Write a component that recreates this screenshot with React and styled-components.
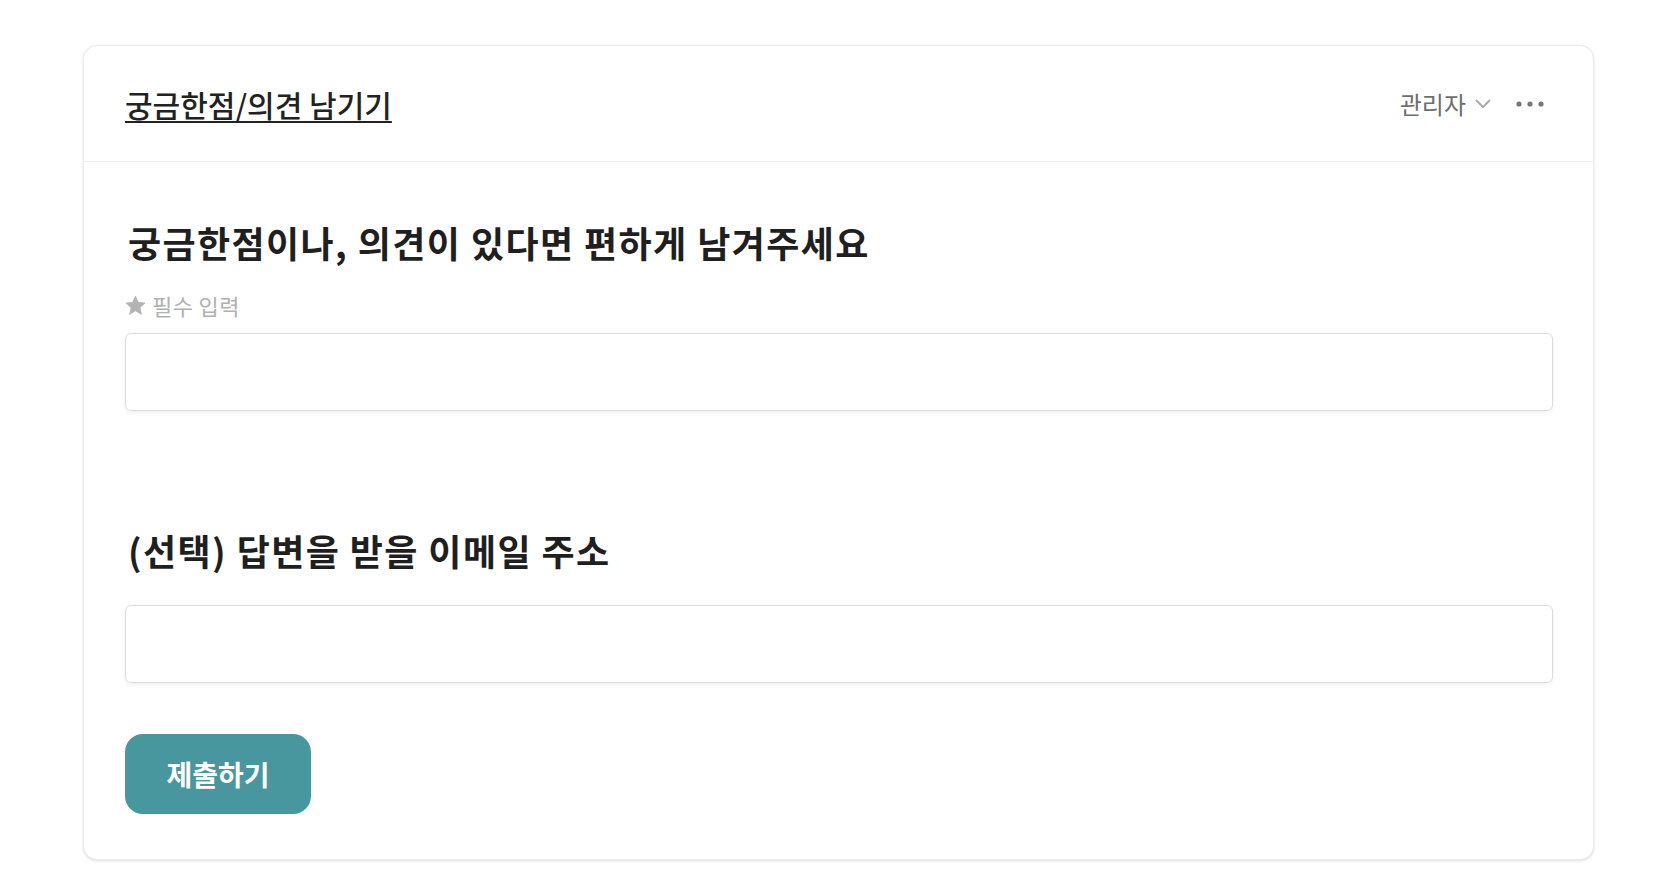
import React from "react";
import styled, { createGlobalStyle } from "styled-components";

const GlobalStyle = createGlobalStyle`
  html, body {
    margin: 0;
    padding: 0;
    background: #ffffff;
  }
  body {
    font-family: "Noto Sans CJK KR", "Noto Sans", sans-serif;
    color: #1f1f1f;
  }
`;

const Page = styled.div`
  padding: 45px 78px 27px 83px;
`;

const Card = styled.section`
  border: 1px solid #ebebeb;
  border-radius: 14px;
  background: #fff;
  box-shadow: 0 1px 3px rgba(0, 0, 0, 0.13);
`;

const Header = styled.header`
  display: flex;
  align-items: center;
  justify-content: space-between;
  height: 115px;
  padding: 0 45px 0 41px;
  border-bottom: 1px solid #f0f0f0;
`;

const Title = styled.a`
  font-size: 30px;
  font-weight: 500;
  color: #222;
  text-decoration: underline;
  text-decoration-thickness: 2px;
  text-underline-offset: 4px;
`;

const Actions = styled.div`
  display: flex;
  align-items: center;
  gap: 20px;
`;

const RoleButton = styled.button`
  display: flex;
  align-items: center;
  gap: 9px;
  border: 0;
  background: none;
  padding: 0;
  font-family: inherit;
  font-size: 24px;
  color: #6e6e6e;
  cursor: pointer;
`;

const MoreButton = styled.button`
  display: flex;
  align-items: center;
  justify-content: center;
  width: 37px;
  height: 30px;
  border: 0;
  background: none;
  padding: 0;
  cursor: pointer;
`;

const Body = styled.div`
  padding: 56px 40px 45px 41px;
`;

const Question = styled.h2`
  margin: 0 0 0 3px;
  font-size: 36px;
  line-height: 48px;
  font-weight: 700;
  color: #1f1f1f;
  letter-spacing: 1.4px;
`;

const Required = styled.div`
  display: flex;
  align-items: center;
  gap: 6px;
  margin-top: 25px;
  font-size: 22px;
  line-height: 28px;
  color: #b0b0b0;
  letter-spacing: 0.4px;
`;

const Field = styled.input`
  display: block;
  box-sizing: border-box;
  width: 100%;
  height: 78px;
  margin-top: ${props => props.gap}px;
  border: 1px solid #dcdcdc;
  border-radius: 6px;
  background: #fff;
  box-shadow: 0 2px 5px rgba(0, 0, 0, 0.06);
  padding: 0 18px;
  font-family: inherit;
  font-size: 22px;
  outline: none;
`;

const Block = styled.div`
  margin-top: ${props => props.gap || 0}px;
`;

const Submit = styled.button`
  display: block;
  width: 186px;
  height: 80px;
  margin-top: 51px;
  border: 0;
  border-radius: 18px;
  background: #48979f;
  color: #fff;
  font-family: inherit;
  font-size: 28px;
  font-weight: 700;
  cursor: pointer;
`;

const Chevron = () => (
  <svg width="16" height="10" viewBox="0 0 16 10" fill="none">
    <path d="M1.5 1.5 L8 8 L14.5 1.5" stroke="#a8a8a8" strokeWidth="1.8" strokeLinecap="round" strokeLinejoin="round" />
  </svg>
);

const Dots = () => (
  <svg width="28" height="6" viewBox="0 0 28 6">
    <circle cx="3" cy="3" r="2.6" fill="#777" />
    <circle cx="14" cy="3" r="2.6" fill="#777" />
    <circle cx="25" cy="3" r="2.6" fill="#777" />
  </svg>
);

const Star = () => (
  <svg width="21" height="21" viewBox="0 0 24 24">
    <path
      d="M12 1.2 L15.2 8.4 L23 9.1 L17.1 14.3 L18.9 22.2 L12 18.1 L5.1 22.2 L6.9 14.3 L1 9.1 L8.8 8.4 Z"
      fill="#b3b3b3"
      stroke="#b3b3b3"
      strokeWidth="0.8"
      strokeLinejoin="round"
    />
  </svg>
);

export default function App() {
  return (
    <>
      <GlobalStyle />
      <Page>
        <Card>
          <Header>
            <Title>궁금한점/의견 남기기</Title>
            <Actions>
              <RoleButton>
                관리자
                <Chevron />
              </RoleButton>
              <MoreButton aria-label="더보기">
                <Dots />
              </MoreButton>
            </Actions>
          </Header>
          <Body>
            <Block>
              <Question>궁금한점이나, 의견이 있다면 편하게 남겨주세요</Question>
              <Required>
                <Star />
                필수 입력
              </Required>
              <Field gap={14} />
            </Block>
            <Block gap={115}>
              <Question>(선택) 답변을 받을 이메일 주소</Question>
              <Field gap={31} />
            </Block>
            <Submit>제출하기</Submit>
          </Body>
        </Card>
      </Page>
    </>
  );
}
